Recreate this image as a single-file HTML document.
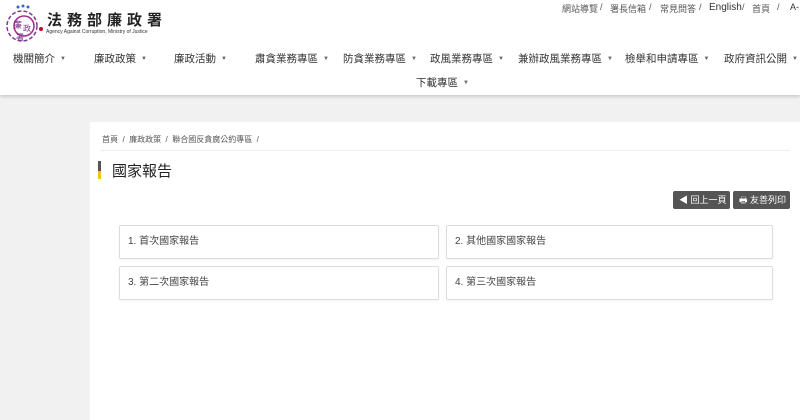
<!DOCTYPE html>
<html><head><meta charset="utf-8"><style>
*{margin:0;padding:0;box-sizing:border-box}
body{width:800px;height:420px;overflow:hidden;background:#f1f1f1;font-family:"Liberation Sans","Noto Sans CJK TC",sans-serif;color:#333;position:relative}
.hdr{position:absolute;left:0;top:0;width:800px;height:95px;background:#fff;box-shadow:0 2px 3px rgba(0,0,0,.15)}
.abs{position:absolute;white-space:nowrap}
.top{top:2px;font-size:9px;color:#555}
.nav{font-size:10.5px;color:#333;top:51px}
.nav span,.tri{font-size:6px;color:#666;margin-left:5px;vertical-align:2px}
.panel{position:absolute;left:90px;top:122px;width:710px;height:298px;background:#fff}
.btn{position:absolute;top:191px;height:18px;background:#555;color:#fff;font-size:9px;line-height:18px;border-radius:2px;padding-left:6px}
.card{position:absolute;width:320px;height:34px;border:1px solid #ddd;border-radius:2px;background:#fff;font-size:10px;color:#444;line-height:32px;padding-left:8px;box-shadow:0 1px 2px rgba(0,0,0,.05)}
</style></head><body>
<div class="hdr">
 <svg class="abs" style="left:3px;top:4px" width="40" height="38" viewBox="0 0 40 38">
  <circle cx="19" cy="22" r="15" fill="none" stroke="#7a3d9a" stroke-width="1.5" stroke-dasharray="4 2"/>
  <circle cx="21" cy="22" r="10" fill="none" stroke="#a02b8a" stroke-width="1.5"/>
  <circle cx="38" cy="25" r="2" fill="#c03"/>
  <circle cx="15" cy="3" r="1.5" fill="#36c"/><circle cx="20" cy="2" r="1.5" fill="#36c"/><circle cx="25" cy="3" r="1.5" fill="#36c"/>
  <text x="10" y="24" font-size="9" fill="#7a2d8a" font-family="Noto Sans CJK TC">廉</text>
  <text x="20" y="27" font-size="8" fill="#7a2d8a" font-family="Noto Sans CJK TC">政</text>
  <text x="13" y="36" font-size="8" fill="#7a2d8a" font-family="Noto Sans CJK TC">署</text>
 </svg>
 <div class="abs" style="left:47px;top:9px;font-size:15px;font-weight:bold;letter-spacing:5px;color:#222">法務部廉政署</div>
 <div class="abs" style="left:46px;top:29px;font-size:5px;color:#333">Agency Against Corruption, Ministry of Justice</div>
 <div class="abs top" style="left:562px">網站導覽</div><div class="abs top" style="left:600px">/</div>
 <div class="abs top" style="left:610px">署長信箱</div><div class="abs top" style="left:649px">/</div>
 <div class="abs top" style="left:660px">常見問答</div><div class="abs top" style="left:699px">/</div>
 <div class="abs top" style="left:709px;font-size:10px;color:#333">English</div><div class="abs top" style="left:742px">/</div>
 <div class="abs top" style="left:752px">首頁</div><div class="abs top" style="left:777px">/</div>
 <div class="abs top" style="left:790px;color:#333">A-</div>
 <div class="abs nav" style="left:13px">機關簡介<span>▼</span></div>
 <div class="abs nav" style="left:94px">廉政政策<span>▼</span></div>
 <div class="abs nav" style="left:174px">廉政活動<span>▼</span></div>
 <div class="abs nav" style="left:255px">肅貪業務專區<span>▼</span></div>
 <div class="abs nav" style="left:343px">防貪業務專區<span>▼</span></div>
 <div class="abs nav" style="left:430px">政風業務專區<span>▼</span></div>
 <div class="abs nav" style="left:518px">兼辦政風業務專區<span>▼</span></div>
 <div class="abs nav" style="left:625px">檢舉和申請專區<span>▼</span></div>
 <div class="abs nav" style="left:724px">政府資訊公開<span>▼</span></div>
 <div class="abs nav" style="left:416px;top:75px">下載專區<span>▼</span></div>
</div>
<div class="panel">
 <div class="abs" style="left:12px;top:12px;font-size:8px;color:#555">首頁 &nbsp;/&nbsp; 廉政政策 &nbsp;/&nbsp; 聯合國反貪腐公約專區 &nbsp;/</div>
 <div class="abs" style="left:10px;top:28px;width:690px;height:1px;background:#eee"></div>
 <div class="abs" style="left:8px;top:39px;width:3px;height:10px;background:#555"></div>
 <div class="abs" style="left:8px;top:49px;width:3px;height:8px;background:#f4c20d"></div>
 <div class="abs" style="left:22px;top:38px;font-size:15px;color:#222">國家報告</div>
</div>
<div class="btn" style="left:673px;width:57px">◀ 回上一頁</div>
<div class="btn" style="left:733px;width:57px">🖶 友善列印</div>
<div class="card" style="left:119px;top:225px">1. 首次國家報告</div>
<div class="card" style="left:446px;top:225px;width:327px">2. 其他國家國家報告</div>
<div class="card" style="left:119px;top:266px">3. 第二次國家報告</div>
<div class="card" style="left:446px;top:266px;width:327px">4. 第三次國家報告</div>
</body></html>
